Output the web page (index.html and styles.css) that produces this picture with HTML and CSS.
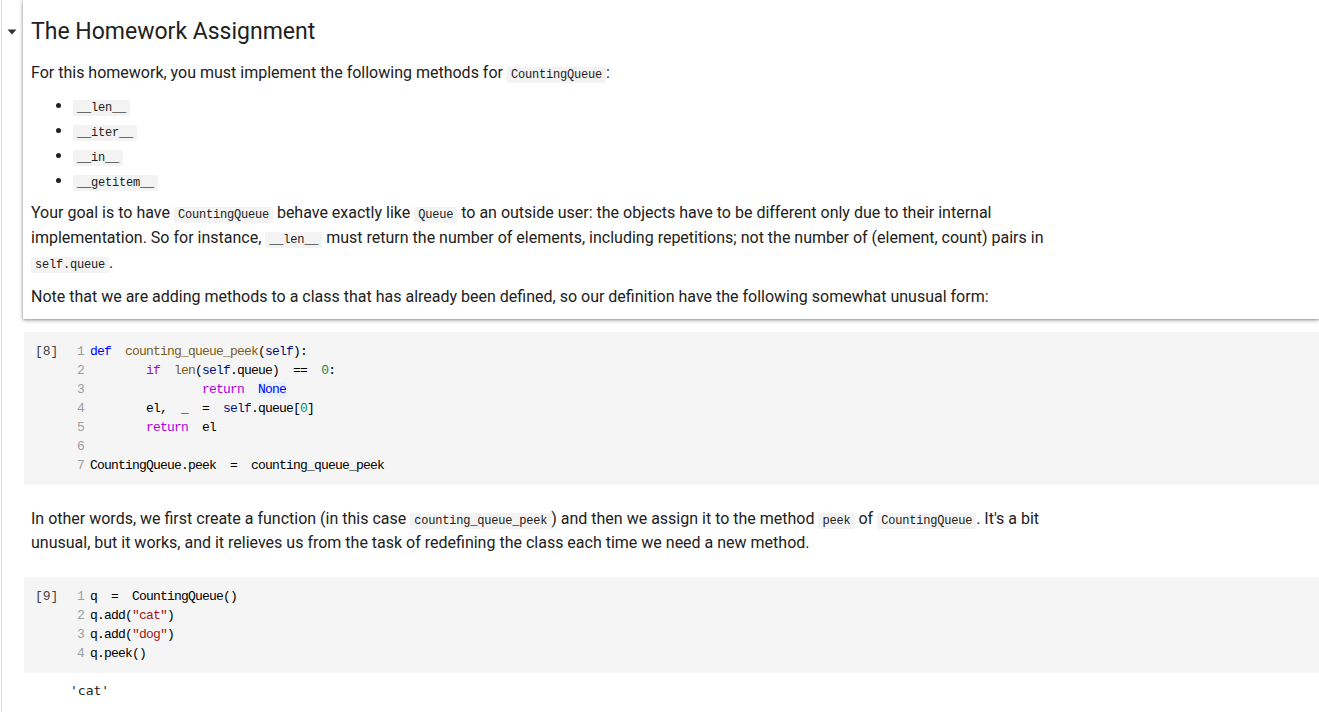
FILE: index.html
```html
<!DOCTYPE html>
<html>
<head>
<meta charset="utf-8">
<link rel="stylesheet" href="styles.css">
</head>
<body>
<div class="notebook">
  <div class="cell-row">
    <div class="gutter">
      <svg class="toggle" width="10" height="6" viewBox="0 0 10 6"><path d="M0.5 0.5 H9.5 L5 5.5 Z" fill="#333"/></svg>
    </div>
    <div class="card">
      <div class="md">
        <h2 class="title">The Homework Assignment</h2>
        <p>For this homework, you must implement the following methods for <code>CountingQueue</code>:</p>
        <ul class="methods">
          <li><code>__len__</code></li>
          <li><code>__iter__</code></li>
          <li><code>__in__</code></li>
          <li><code>__getitem__</code></li>
        </ul>
        <p>Your goal is to have <code>CountingQueue</code> behave exactly like <code>Queue</code> to an outside user: the objects have to be different only due to their internal implementation. So for instance, <code>__len__</code> must return the number of elements, including repetitions; not the number of (element, count) pairs in <code>self.queue</code>.</p>
        <p class="note">Note that we are adding methods to a class that has already been defined, so our definition have the following somewhat unusual form:</p>
      </div>
    </div>
  </div>

  <div class="code-cell first">
    <div class="prompt">[8]</div>
    <div class="linenos">1
2
3
4
5
6
7</div>
    <pre class="code"><span class="kw">def</span>  <span class="fn">counting_queue_peek</span>(<span class="sf">self</span>):
        <span class="ctl">if</span>  <span class="fn">len</span>(<span class="sf">self</span>.queue)  ==  <span class="num">0</span>:
                <span class="ctl">return</span>  <span class="none">None</span>
        el,  _  =  <span class="sf">self</span>.queue[<span class="num">0</span>]
        <span class="ctl">return</span>  el

CountingQueue.peek  =  counting_queue_peek</pre>
  </div>

  <div class="md plain">
    <p>In other words, we first create a function (in this case <code>counting_queue_peek</code>) and then we assign it to the method <code>peek</code> of <code>CountingQueue</code>. It's a bit unusual, but it works, and it relieves us from the task of redefining the class each time we need a new method.</p>
  </div>

  <div class="code-cell second">
    <div class="prompt">[9]</div>
    <div class="linenos">1
2
3
4</div>
    <pre class="code">q  =  CountingQueue()
q.add(<span class="str">"cat"</span>)
q.add(<span class="str">"dog"</span>)
q.peek()</pre>
  </div>

  <div class="output">'cat'</div>
</div>
</body>
</html>
```

FILE: styles.css
```css
html, body {
  margin: 0;
  padding: 0;
  background: #ffffff;
}

body {
  font-family: Roboto, "Noto Sans", sans-serif;
  color: #212121;
  overflow: hidden;
}

.notebook {
  margin-left: 1px;
  border-left: 1px solid #e0e0e0;
  min-height: 712px;
}

.cell-row {
  display: flex;
}

.gutter {
  width: 21px;
  flex: none;
  display: flex;
  justify-content: center;
  padding-top: 29px;
  box-sizing: border-box;
}

.toggle {
  display: block;
  margin-left: -2px;
}

.card {
  flex: 1;
  background: #fff;
  box-shadow: 0 1px 4px rgba(0, 0, 0, 0.45), 0 0 1px rgba(0, 0, 0, 0.25);
  padding: 0 8px 3px 8px;
  min-width: 0;
}

.md {
  max-width: 1050px;
  font-size: 16px;
  line-height: 25px;
}

.md p {
  margin: 7px 0;
}

.md p.note {
  margin-top: 9px;
}

.title {
  font-size: 23px;
  font-weight: 400;
  line-height: 26px;
  margin: 19px 0 15px 0;
  color: #212121;
}

.title + p {
  margin-top: 0;
}

.methods {
  margin: 8px 0 7px 0;
  padding-left: 42px;
}

.methods li {
  line-height: 25px;
}

code {
  font-family: "Liberation Mono", "DejaVu Sans Mono", monospace;
  font-size: 12px;
  line-height: 12px;
  letter-spacing: -0.2px;
  background: #f3f3f3;
  padding: 1px 4px;
  border-radius: 2px;
  color: #212121;
}

.code-cell {
  display: flex;
  margin-left: 22px;
  background: #f5f5f5;
  padding: 10px 0 10px 11px;
  font-family: "Liberation Mono", "DejaVu Sans Mono", monospace;
  font-size: 13px;
  line-height: 19px;
  letter-spacing: -0.8px;
}

.code-cell.first {
  margin-top: 13px;
}

.code-cell.second {
  margin-top: 22px;
}

.prompt {
  width: 34px;
  flex: none;
  color: #424242;
  letter-spacing: 0;
}

.linenos {
  width: 15px;
  flex: none;
  text-align: right;
  white-space: pre;
  color: #9e9e9e;
  margin-right: 6px;
}

.code {
  margin: 0;
  font: inherit;
  letter-spacing: inherit;
  color: #000;
  white-space: pre;
}

.kw { color: #0000ff; }
.fn { color: #795e26; }
.sf { color: #001080; }
.ctl { color: #af00db; }
.num { color: #098658; }
.str { color: #a31515; }
.none { color: #0000ff; background: #e8f0fb; }

.md.plain {
  margin-left: 29px;
  margin-top: 22px;
}

.md.plain p {
  margin: 0;
  line-height: 24px;
}

.output {
  margin: 8px 0 0 68px;
  font-family: "DejaVu Sans Mono", monospace;
  font-size: 13px;
  line-height: 19px;
  color: #212121;
}
```
